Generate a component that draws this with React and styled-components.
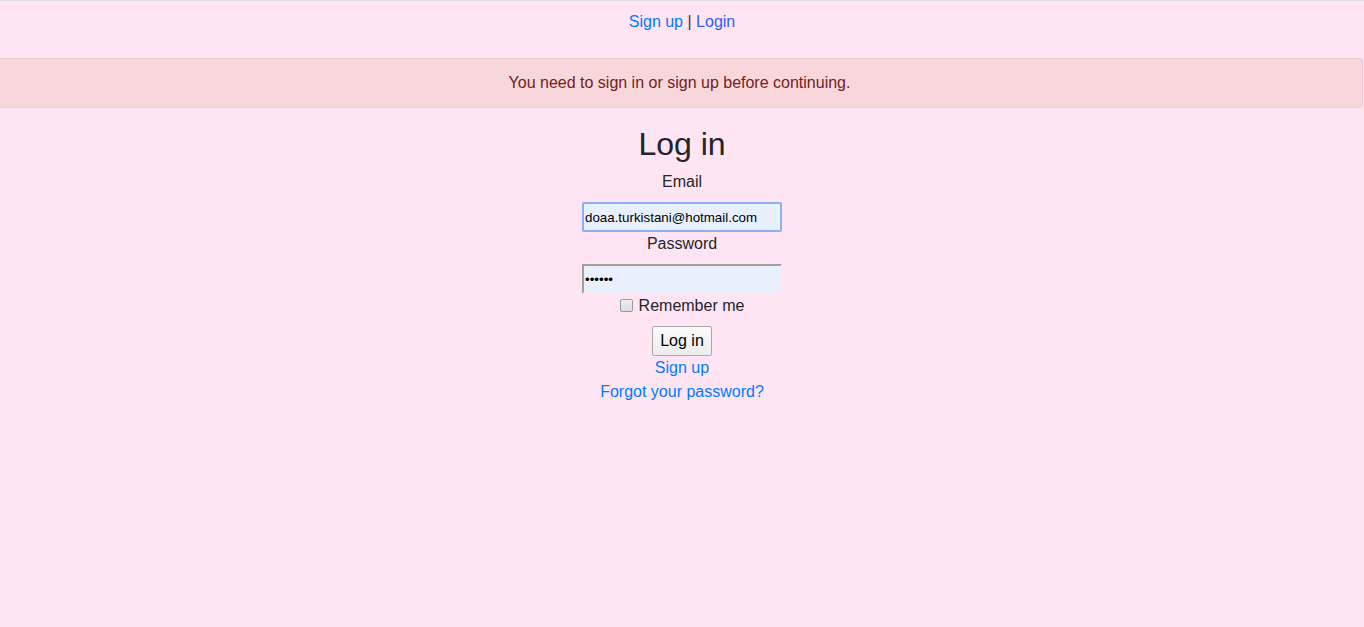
import styled, { createGlobalStyle } from 'styled-components';

const GlobalStyle = createGlobalStyle`
  html, body {
    margin: 0;
    padding: 0;
    background: #ffe5f3;
  }
  body {
    font-family: "Liberation Sans", Arial, Helvetica, sans-serif;
    font-size: 16px;
    line-height: 24px;
    color: #212529;
  }
`;

const Page = styled.div`
  min-height: 627px;
  border-top: 1px solid #e2dde0;
  box-sizing: border-box;
`;

const Nav = styled.p`
  margin: 0;
  padding-top: 9px;
  text-align: center;
`;

const Link = styled.a`
  color: ${({ visited }) => (visited ? '#2f5ef5' : '#007bff')};
  text-decoration: none;
  cursor: pointer;
`;

const Separator = styled.span`
  color: #5a1f30;
`;

const Alert = styled.div`
  margin: 24px 1px 0 -4px;
  padding: 12px 20px;
  border: 1px solid #f5c6cb;
  border-radius: 4px;
  background: #f8d7da;
  color: #721c24;
  text-align: center;
`;

const Form = styled.form`
  display: flex;
  flex-direction: column;
  align-items: center;
`;

const Title = styled.h2`
  margin: 17px 0 7px;
  font-size: 32px;
  line-height: 38px;
  font-weight: 500;
  color: #212529;
`;

const Label = styled.label`
  display: block;
  margin-bottom: 8px;
`;

const Field = styled.input`
  box-sizing: border-box;
  width: 200px;
  height: 30px;
  padding: 1px 1px;
  font-family: "Liberation Sans", Arial, sans-serif;
  font-size: 13.33px;
  color: #000;
  background: #e8f0fe;
  border-style: solid;
  border-width: 2px;
  border-color: #a0a0a0 #eceef4 #eceef4 #a0a0a0;
  outline: none;
  caret-color: #000;
  ${({ focused }) =>
    focused &&
    `
    border-color: #8db0ef;
    border-radius: 2px;
  `}
`;

const Check = styled.div`
  display: flex;
  align-items: center;
  margin-bottom: 8px;

  input {
    appearance: none;
    box-sizing: border-box;
    margin: 0 6px 2px 0;
    width: 13px;
    height: 13px;
    border: 1px solid #9a9a9a;
    border-radius: 2px;
    background: linear-gradient(#eeeeee, #dcdcdc);
  }
`;

const Button = styled.button`
  height: 30px;
  width: 60px;
  padding: 0;
  font-family: "Liberation Sans", Arial, sans-serif;
  font-size: 16px;
  color: #000;
  background: linear-gradient(#fbfbfb, #ececec);
  border: 1px solid #a9a9a9;
  border-radius: 2px;
`;

export default function App() {
  return (
    <>
      <GlobalStyle />
      <Page>
        <Nav>
          <Link href="#">Sign up</Link> <Separator>|</Separator>{' '}
          <Link href="#" visited>
            Login
          </Link>
        </Nav>
        <Alert>You need to sign in or sign up before continuing.</Alert>
        <Form onSubmit={(e) => e.preventDefault()}>
          <Title>Log in</Title>
          <Label htmlFor="email">Email</Label>
          <Field
            id="email"
            type="email"
            defaultValue="doaa.turkistani@hotmail.com"
            focused
          />
          <Label htmlFor="password">Password</Label>
          <Field id="password" type="password" defaultValue="123456" />
          <Check>
            <input type="checkbox" id="remember" />
            <label htmlFor="remember">Remember me</label>
          </Check>
          <Button type="submit">Log in</Button>
          <Link href="#">Sign up</Link>
          <Link href="#">Forgot your password?</Link>
        </Form>
      </Page>
    </>
  );
}
